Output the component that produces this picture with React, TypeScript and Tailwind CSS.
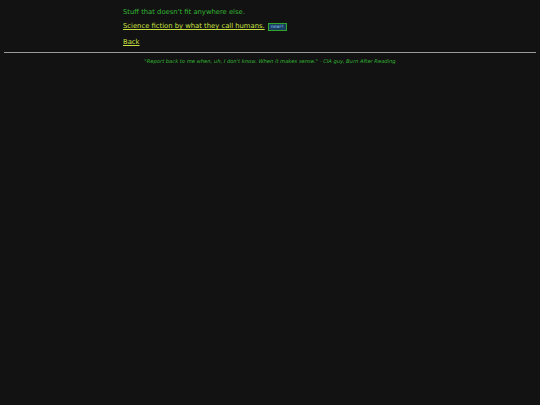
export default function App() {
  return (
    <div className="min-h-screen bg-[#121212] font-['DejaVu_Sans',sans-serif]">
      <div className="mx-auto w-[294px] pt-[8px] text-[6.8px] leading-[9px]">
        <p className="text-[#33b533]">Stuff that doesn't fit anywhere else.</p>
        <p className="mt-[5px] flex items-center gap-[3px]">
          <a href="#" className="text-[#c8e040] underline">Science fiction by what they call humans.</a>
          <span className="border border-[#2fa52f] bg-[#1a3f5c] px-[2px] text-[4.5px] leading-[6px] text-[#8cc8ff]">new!!</span>
        </p>
        <p className="mt-[7px]">
          <a href="#" className="text-[#c8e040] underline">Back</a>
        </p>
      </div>
      <hr className="mx-[4px] mt-[5px] border-t-[1px] border-[#9a9a9a]" />
      <p className="mt-[5px] text-center text-[5.2px] italic text-[#33b533]">
        "Report back to me when, uh, I don't know. When it makes sense." - CIA guy, Burn After Reading
      </p>
    </div>
  );
}
